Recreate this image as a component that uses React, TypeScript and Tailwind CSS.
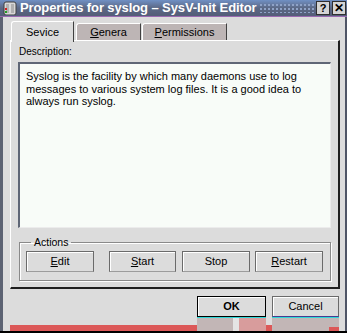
import React from "react";

const TitleIcon = () => (
  <svg width="14" height="14" viewBox="0 0 14 14" className="shrink-0">
    <rect x="1" y="1" width="12" height="13" rx="2" fill="#d8d8d8" stroke="#404040" />
    <rect x="3" y="3" width="3" height="9" fill="#b0b0b0" />
    <rect x="8" y="3" width="3" height="9" fill="#b0b0b0" />
    <rect x="2" y="7" width="2" height="2" fill="#d02020" />
    <rect x="2" y="10" width="2" height="2" fill="#20a020" />
  </svg>
);

const TitleBar = () => (
  <div className="h-[17px] flex items-stretch bg-gradient-to-b from-[#7090c4] via-[#5b6885] to-[#545d78] border-b border-[#9a6ab0]">
    <div className="w-[20px] flex items-center justify-center">
      <TitleIcon />
    </div>
    <div className="text-white font-bold text-[13px] leading-[16px] tracking-[-0.1px] whitespace-nowrap font-['Liberation_Sans',sans-serif]">
      Properties for syslog – SysV-Init Editor
    </div>
    <div className="flex-1 mx-[2px] my-[3px] bg-[radial-gradient(circle,#8fa3c8_0.8px,transparent_1px)] bg-[length:4px_4px]" />
    <div className="flex items-center gap-[2px] pr-[1px]">
      <div className="w-[14px] h-[14px] bg-[#d4d4d4] border border-[#303030] flex items-center justify-center text-[11px] font-bold leading-none">
        ?
      </div>
      <div className="w-[14px] h-[14px] bg-[#d4d4d4] border border-[#303030] flex items-center justify-center text-[12px] font-bold leading-none">
        ✕
      </div>
    </div>
  </div>
);

const Btn = ({ children, w, className = "" }: { children: React.ReactNode; w: string; className?: string }) => (
  <div
    className={`${w} h-[21px] bg-[#dcdcdc] border border-[#6b6b6b] border-b-[#9c9c9c] shadow-[inset_1px_1px_0_#fff] flex items-center justify-center text-[11px] ${className}`}
  >
    {children}
  </div>
);

export default function App() {
  return (
    <div className="w-[347px] h-[333px] bg-[#dcdcdc] flex flex-col overflow-hidden font-['Liberation_Sans',sans-serif] text-black">
      <TitleBar />
      <div className="flex-1 flex flex-col border-l-[3px] border-r-[2px] border-l-[#5c6272] border-r-[#4f5566] pl-[7px] pr-[5px]">
        {/* tabs */}
        <div className="flex items-start pt-[4px] pl-[1px] h-[24px]">
          <div className="relative z-10 w-[63px] h-[21px] bg-[#dcdcdc] border-t border-l border-white border-r border-r-[#404040] rounded-tl-[3px] flex items-center justify-center text-[11px]">
            Sevice
          </div>
          <div className="mt-[2px] ml-[2px] w-[65px] h-[18px] bg-[#bdb5b5] border-t border-l border-white border-r border-r-[#404040] rounded-tl-[3px] flex items-center justify-center text-[11px]">
            <span>
              <span className="underline">G</span>enera
            </span>
          </div>
          <div className="mt-[2px] ml-[1px] w-[85px] h-[18px] bg-[#bdb5b5] border-t border-l border-white border-r border-r-[#404040] rounded-tl-[3px] flex items-center justify-center text-[11px]">
            <span>
              <span className="underline">P</span>ermissions
            </span>
          </div>
        </div>

        {/* panel */}
        <div className="-mt-[1px] h-[249px] border-t border-l border-white border-r-2 border-b-2 border-r-[#202020] border-b-[#202020] px-[7px] pt-[5px] flex flex-col">
          <div className="text-[10px] leading-[12px] pl-[1px]">Description:</div>
          <div className="mt-[4px] h-[166px] bg-[#f8fcf8] border-t-2 border-l-2 border-t-[#5f6676] border-l-[#5f6676] border-r border-b border-r-[#ececec] border-b-[#ececec] pl-[6px] pr-[14px] pt-[6px] text-[11px] leading-[12.5px]">
            Syslog is the facility by which many daemons use to log messages to various system log files. It is a good idea to always run syslog.
          </div>

          <fieldset className="mt-[8px] mx-[1px] border border-[#8a8a8a] shadow-[inset_1px_1px_0_#fff,1px_1px_0_#fff] pl-[6px] pr-[7px] pt-[3px] pb-[8px]">
            <legend className="ml-[5px] px-[3px] text-[10.5px] leading-[12px]">Actions</legend>
            <div className="flex">
              <Btn w="w-[68px]">
                <span>
                  <span className="underline">E</span>dit
                </span>
              </Btn>
              <Btn w="w-[67px]" className="ml-[15px]">
                <span>
                  <span className="underline">S</span>tart
                </span>
              </Btn>
              <Btn w="w-[68px]" className="ml-[6px]">
                Stop
              </Btn>
              <Btn w="w-[68px]" className="ml-[5px]">
                <span>
                  <span className="underline">R</span>estart
                </span>
              </Btn>
            </div>
          </fieldset>
        </div>

        {/* dialog buttons */}
        <div className="mt-[7px] flex justify-end gap-[6px] pr-[1px]">
          <div className="w-[69px] h-[21px] bg-[#dcdcdc] border border-black shadow-[inset_1px_1px_0_#fff] flex items-center justify-center text-[11px] font-bold">
            OK
          </div>
          <div className="w-[67px] h-[21px] bg-[#dcdcdc] border border-[#6b6b6b] border-b-[#4a3a90] shadow-[inset_1px_1px_0_#fff] flex items-center justify-center text-[11px]">
            Cancel
          </div>
        </div>

        {/* redraw artefacts along the bottom edge */}
        <div className="flex-1 flex items-stretch">
          <div className="flex-1 flex flex-col justify-end">
            <div className="h-[6px] bg-[#dc5858]" />
          </div>
          <div className="w-[69px] bg-[#c2b6b6] border-t border-[#30d8d8] flex">
            <div className="w-[36px]" />
            <div className="w-[6px] bg-[#e4e4e4]" />
            <div className="flex-1 bg-[#d89c9c]" />
          </div>
          <div className="w-[6px] flex flex-col justify-end">
            <div className="h-[6px] bg-[#dc5858]" />
          </div>
          <div className="w-[67px] bg-[#c2b6b6] border-t border-[#30d8d8] flex flex-col justify-end items-end">
            <div className="w-[10px] h-[4px] bg-[#dc5858]" />
          </div>
          <div className="w-[1px]" />
        </div>
      </div>
      <div className="h-[2px] bg-black" />
    </div>
  );
}
